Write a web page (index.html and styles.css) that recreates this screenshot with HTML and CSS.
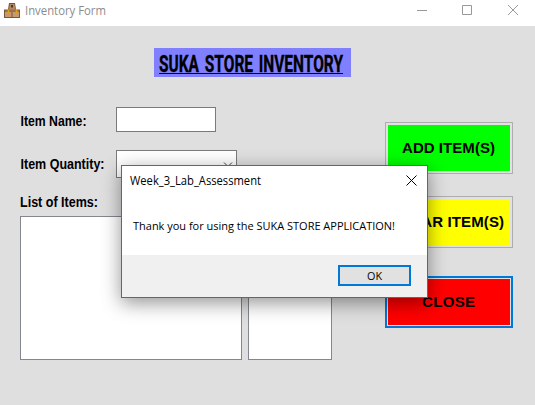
FILE: index.html
```html
<!DOCTYPE html>
<html lang="en">
<head>
<meta charset="utf-8">
<title>Inventory Form</title>
<link rel="stylesheet" href="styles.css">
</head>
<body>
<div class="window">
  <header class="titlebar">
    <svg class="app-icon" width="16" height="16" viewBox="0 0 16 16">
      <path d="M5 0h6l1 6.500H4z" fill="#7a5638"/>
      <path d="M6 1h4.500l.5 5H5z" fill="#b58860"/>
      <rect x="7" y="2" width="2" height="2.500" fill="#4a382c"/>
      <rect x="0" y="6.500" width="16" height="8.500" fill="#7a5638"/>
      <rect x="1" y="9" width="6.500" height="5" fill="#c79a6c"/>
      <rect x="8.500" y="9" width="6.500" height="5" fill="#c79a6c"/>
      <rect x="1" y="7" width="14" height="2" fill="#9a7048"/>
      <path d="M4.500 7v3M12.500 7v3" stroke="#e6a11c" stroke-width="1.500"/>
    </svg>
    <svg class="text app-title" width="81" height="20"><text x="0" y="14" textLength="81" lengthAdjust="spacingAndGlyphs">Inventory Form</text></svg>
    <svg class="controls" width="102" height="10" viewBox="0 0 102 10">
      <path d="M0 5.500h10M45.500 .5h9v9h-9zM91 0l10 10M101 0L91 10"/>
    </svg>
  </header>

  <main class="form">
    <h1 class="heading"><svg class="text" width="197" height="29"><text x="5" y="24" textLength="184" lengthAdjust="spacingAndGlyphs">SUKA STORE INVENTORY</text><path d="M5 25.500h184" stroke="#000"/></svg></h1>
    <div class="columns">
      <section class="fields">
        <div class="row row-name">
          <svg class="text label" width="96" height="25"><text x="0.500" y="19" textLength="66" lengthAdjust="spacingAndGlyphs">Item Name:</text></svg>
          <div class="input"></div>
        </div>
        <div class="row row-qty">
          <svg class="text label" width="96" height="28"><text x="0.500" y="19" textLength="84" lengthAdjust="spacingAndGlyphs">Item Quantity:</text></svg>
          <div class="combo"><svg width="10" height="6" viewBox="0 0 10 6"><path d="M1 .5l4 4 4-4"/></svg></div>
        </div>
        <svg class="text label list-label" width="96" height="22"><text x="0" y="13" textLength="78" lengthAdjust="spacingAndGlyphs">List of Items:</text></svg>
        <div class="lists">
          <div class="list names"></div>
          <div class="list counts"></div>
        </div>
      </section>
      <section class="actions">
        <div class="button add"><svg class="text" width="122" height="46"><text x="14" y="28" textLength="93" lengthAdjust="spacing">ADD ITEM(S)</text></svg></div>
        <div class="button clear"><svg class="text" width="122" height="46"><text x="3" y="28" textLength="113" lengthAdjust="spacing">CLEAR ITEM(S)</text></svg></div>
        <div class="button close"><svg class="text" width="122" height="46"><text x="34" y="28" textLength="53" lengthAdjust="spacing">CLOSE</text></svg></div>
      </section>
    </div>
  </main>

  <div class="dialog">
    <div class="dialog-head">
      <svg class="text" width="132" height="30"><text x="0" y="19" textLength="131" lengthAdjust="spacingAndGlyphs">Week_3_Lab_Assessment</text></svg>
      <svg class="dialog-x" width="11" height="11" viewBox="0 0 11 11"><path d="M.5 .5l10 10M10.500 .5l-10 10"/></svg>
    </div>
    <div class="dialog-body">
      <svg class="text message" width="264" height="20"><text x="0" y="14" textLength="262" lengthAdjust="spacingAndGlyphs">Thank you for using the SUKA STORE APPLICATION!</text></svg>
    </div>
    <div class="dialog-foot">
      <div class="ok"><svg class="text message" width="15" height="17"><text x="0" y="13" textLength="15" lengthAdjust="spacingAndGlyphs">OK</text></svg></div>
    </div>
  </div>
</div>
</body>
</html>
```
FILE: styles.css
```css
* { box-sizing: border-box; }
body { margin: 0; }
svg { display: block; flex: none; }
.window {
  position: relative;
  width: 535px;
  height: 405px;
  overflow: hidden;
  background: #dfdfdf;
  font-family: "Open Sans", "Noto Sans", sans-serif;
}
.text { overflow: visible; font-size: 12px; fill: #000; }
.titlebar {
  display: flex;
  height: 26px;
  padding: 0 16px 0 4px;
  background: #fff;
}
.app-icon { margin-top: 3px; }
.app-title { margin: 1px 0 0 5px; fill: #8c8c8c; }
.controls { margin: 5px 0 0 auto; fill: none; stroke: #999; }

.form { padding: 22px 22px 0 20px; }
.heading {
  width: 197px;
  height: 29px;
  margin: 0 0 0 134px;
  background: #8080ff;
}
.heading .text { font: bold 24px Roboto, sans-serif; word-spacing: 3px; }
.heading text { stroke: #000; stroke-width: .4px; }
.columns { display: flex; justify-content: space-between; }
.fields { padding-top: 30px; }
.row { display: flex; }
.row-name { height: 43px; }
.row-qty { height: 44px; }
.label { font: bold 14.500px "Liberation Sans", sans-serif; }
.input { width: 100px; height: 25px; background: #fff; border: 1px solid #7a7a7a; }
.combo {
  display: flex;
  justify-content: flex-end;
  width: 121px;
  height: 28px;
  padding: 11px 3px 0 0;
  background: #fff;
  border: 1px solid #7a7a7a;
}
.combo svg { fill: none; stroke: #444; }
.lists { display: flex; gap: 6px; }
.list { height: 144px; background: #fff; border: 1px solid #828790; }
.names { width: 222px; }
.counts { width: 84px; }

.actions {
  display: flex;
  flex-direction: column;
  padding-top: 45px;
}
.button {
  width: 128px;
  height: 52px;
  padding: 2px;
  border: 1px solid #adadad;
  background: #e1e1e1;
}
.button .text { font: bold 15px "Liberation Sans", sans-serif; }
.add .text { background: #0f0; }
.clear { margin-top: 22px; }
.clear .text { background: #ff0; }
.close { margin-top: 28px; padding: 1px; border: 2px solid #0078d7; }
.close .text { background: #f00; }

.dialog {
  position: absolute;
  left: 121px;
  top: 165px;
  width: 307px;
  height: 133px;
  border: 1px solid #666;
  background: #fff;
  box-shadow: 0 5px 18px rgba(0, 0, 0, .42);
}
.dialog-head {
  display: flex;
  justify-content: space-between;
  height: 50px;
  padding: 0 10px 0 8px;
}
.dialog-x { margin-top: 9px; fill: none; stroke: #000; }
.dialog-body { height: 39px; padding-left: 11px; }
.message { font-size: 11.500px; }
.dialog-foot {
  display: flex;
  justify-content: flex-end;
  height: 42px;
  padding: 10px 16px 0 0;
  background: #f0f0f0;
}
.ok {
  display: flex;
  justify-content: center;
  width: 73px;
  height: 21px;
  border: 2px solid #0078d7;
  background: #e1e1e1;
}
```
